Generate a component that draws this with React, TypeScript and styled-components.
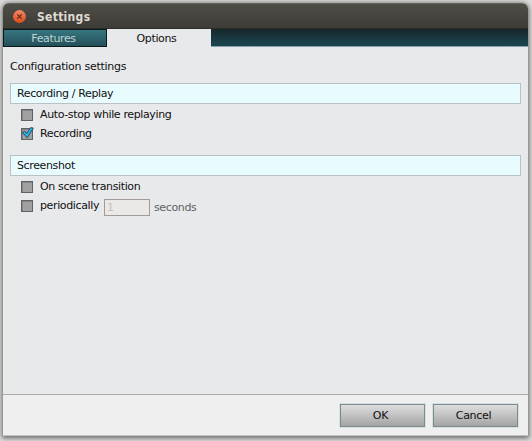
import React from "react";
import styled, { createGlobalStyle } from "styled-components";

const Global = createGlobalStyle`
  * { box-sizing: border-box; }
  body {
    margin: 0;
    background: #dcdcdb;
    font: 11px/14px "DejaVu Sans", sans-serif;
    letter-spacing: -0.37px;
    color: #101010;
    overflow: hidden;
  }
`;

const Desktop = styled.div`
  width: 532px;
  height: 441px;
  padding: 3px 0 0 3px;
  overflow: hidden;
`;

const Window = styled.div`
  width: 525px;
  height: 433px;
  display: flex;
  flex-direction: column;
  border-radius: 6px 6px 0 0;
  box-shadow: 0 1px 5px 1px rgba(0, 0, 0, 0.55);
  background: #e8e9eb;
  overflow: hidden;
`;

const TitleBar = styled.header`
  height: 26px;
  flex: none;
  display: flex;
  align-items: center;
  padding: 1px 0 0 10px;
  gap: 11px;
  border-top: 1px solid #65645e;
  border-bottom: 1px solid #2c2c26;
  background: linear-gradient(#4e4d47, #3d3c37);
`;

const Title = styled.h1`
  margin: 0;
  font: bold 12px/16px "DejaVu Sans Condensed", "DejaVu Sans", sans-serif;
  font-stretch: 90%;
  letter-spacing: 0.3px;
  color: #dfdbd2;
`;

const TabBar = styled.nav`
  height: 18px;
  flex: none;
  display: flex;
  background: linear-gradient(#17272c, #1b4750);
  border-bottom: 1px solid #85a0a6;
`;

const Tab = styled.div<{ $active?: boolean }>`
  width: 104px;
  height: 18px;
  text-align: center;
  color: ${(p) => (p.$active ? "#101010" : "#bfd4d6")};
  background: ${(p) => (p.$active ? "#e8e9eb" : "linear-gradient(#36767f, #24505a)")};
  border: ${(p) => (p.$active ? "0" : "1px solid #0b1719")};
  line-height: ${(p) => (p.$active ? "20px" : "18px")};
  padding-right: ${(p) => (p.$active ? "5px" : "3px")};
`;

const Content = styled.main`
  flex: 1;
  padding: 13px 7px 0;
`;

const Heading = styled.div`
  height: 15px;
  margin-bottom: 8px;
  letter-spacing: -0.26px;
`;

const SectionTitle = styled.h2`
  margin: 0 0 5px;
  width: 511px;
  height: 21px;
  padding-left: 6px;
  font: inherit;
  line-height: 19px;
  background: #e8fcff;
  border: 1px solid #bbc0c2;
`;

const Section = styled.section`
  height: 72px;
`;

const Option = styled.label`
  display: flex;
  align-items: center;
  height: 12px;
  margin: 0 0 7px 11px;
  gap: 7px;
`;

const Box = styled.span`
  width: 12px;
  height: 12px;
  flex: none;
  background: #a0a0a0;
  border: 1px solid #606263;
  box-shadow: inset 1px 1px 0 #858585;
`;

const Tick = styled.svg`
  display: block;
  width: 12px;
  height: 12px;
  margin: -2px 0 0 0;
  overflow: visible;
`;

const Caption = styled.span<{ $width?: number }>`
  width: ${(p) => (p.$width ? `${p.$width}px` : "auto")};
  white-space: nowrap;
`;

const Interval = styled.span`
  width: 46px;
  height: 17px;
  margin: 2px -3px 0 -1px;
  padding-left: 2px;
  line-height: 16px;
  color: #c4c1be;
  background: #ebe9e8;
  border: 1px solid #a09a98;
`;

const Unit = styled.span`
  color: #606163;
  margin-top: 3px;
`;

const Footer = styled.footer`
  height: 42px;
  flex: none;
  display: flex;
  justify-content: flex-end;
  gap: 8px;
  padding: 9px 10px 0 0;
  background: #efefef;
  border-top: 1px solid #a9abad;
  border-bottom: 1px solid #c2c2c1;
`;

const Button = styled.button`
  width: 85px;
  height: 23px;
  padding: 1px 4px 0 0;
  font: inherit;
  letter-spacing: -0.3px;
  color: #101010;
  border: 1px solid #808a8c;
  outline: 1px solid #d0e2e3;
  background: linear-gradient(#dedede, #a4a4a4);
`;

function CloseIcon() {
  return (
    <svg width="13" height="13" viewBox="0 0 13 13">
      <defs>
        <linearGradient id="close" x1="0" y1="0" x2="0" y2="1">
          <stop stopColor="#f58763" />
          <stop offset="1" stopColor="#df4b1b" />
        </linearGradient>
      </defs>
      <circle cx="6.5" cy="6.5" r="6.4" fill="url(#close)" />
      <path d="M4.3 4.3 8.7 8.7M8.7 4.3 4.3 8.7" stroke="#53291b" strokeWidth="1.1" />
    </svg>
  );
}

function Checkbox({ checked }: { checked?: boolean }) {
  return (
    <Box>
      {checked && (
        <Tick viewBox="0 0 12 12">
          <path d="M0.6 5.4 2.8 4.2 4.6 6.6 8.6 0.6 11.4 1 5.1 10.9Z" fill="#2bb4ec" stroke="#163a4a" strokeWidth="0.8" />
        </Tick>
      )}
    </Box>
  );
}

export default function App() {
  return (
    <Desktop>
      <Global />
      <Window>
        <TitleBar>
          <CloseIcon />
          <Title>Settings</Title>
        </TitleBar>
        <TabBar>
          <Tab>Features</Tab>
          <Tab $active>Options</Tab>
        </TabBar>
        <Content>
          <Heading>Configuration settings</Heading>
          <Section>
            <SectionTitle>Recording / Replay</SectionTitle>
            <Option><Checkbox /><Caption>Auto-stop while replaying</Caption></Option>
            <Option><Checkbox checked /><Caption>Recording</Caption></Option>
          </Section>
          <Section>
            <SectionTitle>Screenshot</SectionTitle>
            <Option><Checkbox /><Caption>On scene transition</Caption></Option>
            <Option>
              <Checkbox />
              <Caption $width={58}>periodically</Caption>
              <Interval>1</Interval>
              <Unit>seconds</Unit>
            </Option>
          </Section>
        </Content>
        <Footer>
          <Button>OK</Button>
          <Button>Cancel</Button>
        </Footer>
      </Window>
    </Desktop>
  );
}
